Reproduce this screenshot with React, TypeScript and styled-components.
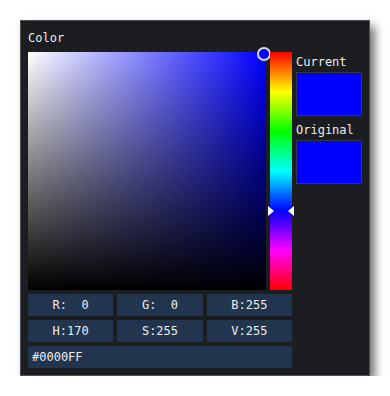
import styled, { createGlobalStyle } from 'styled-components';

const GlobalStyle = createGlobalStyle`
	body {
		margin: 0;
		background: #ffffff;
		font-family: 'DejaVu Sans Mono', 'Liberation Mono', monospace;
	}
	#root {
		padding: 20px 0 0 20px;
	}
`;

const Window = styled.div`
	box-sizing: border-box;
	width: 350px;
	height: 356px;
	padding: 7px;
	background: #1b1d20;
	border: 1px solid #4d5055;
	box-shadow: 5px 6px 9px rgba(0, 0, 0, 0.55);
	color: #ededed;
	font-size: 12px;
`;

const Title = styled.div`
	box-sizing: border-box;
	height: 16px;
	line-height: 16px;
	padding-top: 2px;
	margin-bottom: 8px;
`;

const PickerRow = styled.div`
	display: flex;
	gap: 4px;
`;

const SvArea = styled.div`
	position: relative;
	width: 238px;
	height: 238px;
	background: linear-gradient(to top, #000000, rgba(0, 0, 0, 0)), linear-gradient(to right, #ffffff, #0000ff);
`;

const SvMarker = styled.div`
	position: absolute;
	right: -5px;
	top: -5px;
	width: 10px;
	height: 10px;
	border-radius: 50%;
	background: #0000ff;
	border: 2px solid #d8d8e8;
`;

const HueBar = styled.div`
	position: relative;
	width: 22px;
	height: 238px;
	background: linear-gradient(
		to bottom,
		#ff0000 0%,
		#ffff00 16.67%,
		#00ff00 33.33%,
		#00ffff 50%,
		#0000ff 66.67%,
		#ff00ff 83.33%,
		#ff0000 100%
	);
`;

const Arrow = styled.div<{ side: 'left' | 'right' }>`
	position: absolute;
	top: 154px;
	width: 0;
	height: 0;
	border-top: 5px solid transparent;
	border-bottom: 5px solid transparent;
	${({ side }) =>
		side === 'left'
			? 'left: -2px; border-left: 6px solid #ffffff;'
			: 'right: -2px; border-right: 6px solid #ffffff;'}
`;

const SidePanel = styled.div`
	display: flex;
	flex-direction: column;
	gap: 4px;
	width: 66px;
`;

const Label = styled.div`
	box-sizing: border-box;
	height: 16px;
	line-height: 16px;
	padding-top: 2px;
`;

const Swatch = styled.div<{ color: string }>`
	box-sizing: border-box;
	height: 44px;
	background: ${({ color }) => color};
	border: 1px solid #34384a;
`;

const Fields = styled.div`
	display: grid;
	grid-template-columns: repeat(3, 1fr);
	gap: 4px;
	width: 264px;
	margin-top: 4px;
`;

const Field = styled.div<{ wide?: boolean }>`
	height: 22px;
	line-height: 22px;
	background: #22354f;
	white-space: pre;
	text-align: ${({ wide }) => (wide ? 'left' : 'center')};
	padding: 0 ${({ wide }) => (wide ? '4px' : '0')};
	grid-column: ${({ wide }) => (wide ? '1 / -1' : 'auto')};
`;

const fields = ['R:  0', 'G:  0', 'B:255', 'H:170', 'S:255', 'V:255'];

const App = () => (
	<>
		<GlobalStyle />
		<Window>
			<Title>Color</Title>
			<PickerRow>
				<SvArea>
					<SvMarker />
				</SvArea>
				<HueBar>
					<Arrow side='left' />
					<Arrow side='right' />
				</HueBar>
				<SidePanel>
					<Label>Current</Label>
					<Swatch color='#0000ff' />
					<Label>Original</Label>
					<Swatch color='#0000ff' />
				</SidePanel>
			</PickerRow>
			<Fields>
				{fields.map((f) => (
					<Field key={f}>{f}</Field>
				))}
				<Field wide>#0000FF</Field>
			</Fields>
		</Window>
	</>
);

export default App;
